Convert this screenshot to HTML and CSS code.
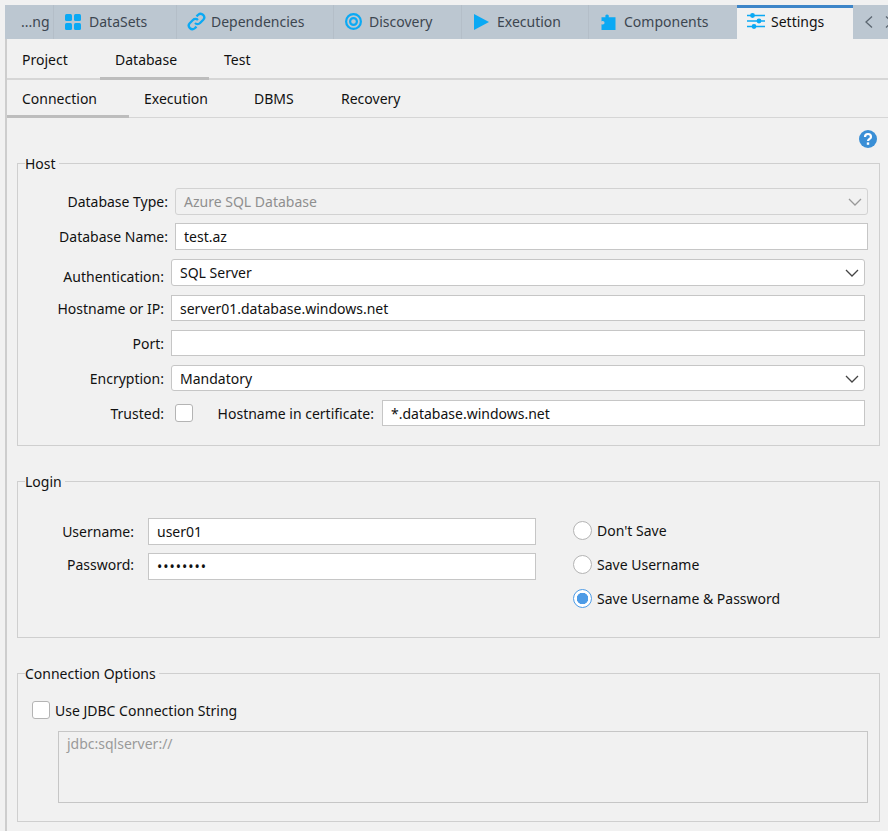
FILE: index.html
```html
<!DOCTYPE html>
<html lang="en">
<head>
    <meta charset="UTF-8">
    <title>Database Settings</title>
    <link rel="stylesheet" href="styles.css">
</head>
<body>
    <div class="tabbar">
        <div class="tab tab-cut">...ng</div>
        <div class="tab tab-datasets">
            <svg class="icon" width="16" height="16" viewBox="0 0 16 16"><rect x="0" y="0" width="7" height="7" rx="1.5"/><rect x="9" y="0" width="7" height="7" rx="1.5"/><rect x="0" y="9" width="7" height="7" rx="1.5"/><rect x="9" y="9" width="7" height="7" rx="1.5"/></svg>
            DataSets
        </div>
        <div class="tab tab-deps">
            <svg class="icon" width="19" height="19" viewBox="0 0 18 18"><path class="line" d="M7.6 10.4a3.4 3.4 0 0 0 4.8 0l3-3a3.4 3.4 0 0 0-4.8-4.8L9 4.2"/><path class="line" d="M10.4 7.6a3.4 3.4 0 0 0-4.8 0l-3 3a3.4 3.4 0 0 0 4.8 4.8L9 13.8"/></svg>
            Dependencies
        </div>
        <div class="tab tab-discovery">
            <svg class="icon" width="17" height="17" viewBox="0 0 17 17"><circle class="line" cx="8.5" cy="8.5" r="7.4"/><circle class="line" cx="8.5" cy="8.5" r="3.4"/></svg>
            Discovery
        </div>
        <div class="tab tab-execution">
            <svg class="icon" width="15" height="16" viewBox="0 0 15 16"><path d="M0 0L15 8L0 16Z"/></svg>
            Execution
        </div>
        <div class="tab tab-components">
            <svg class="icon" width="15" height="16" viewBox="0 0 15 16"><path d="M6 0.5C7.5 0.5 8.2 1.5 7.7 3.2H14.5V16H0.5V10.2C2.3 11 3.5 10.2 3.5 8.8C3.5 7.4 2.3 6.6 0.5 7.4V3.2H4.5C4 1.5 4.6 0.5 6 0.5Z"/></svg>
            Components
        </div>
        <div class="tab tab-active">
            <svg class="icon" width="18" height="16" viewBox="0 0 18 16"><path class="bar" d="M0 2.5H18M0 8H18M0 13.5H18"/><circle cx="5.5" cy="2.5" r="2.4"/><circle cx="12" cy="8" r="2.4"/><circle cx="7" cy="13.5" r="2.4"/></svg>
            Settings
        </div>
        <div class="tab-nav">
            <svg width="10" height="14" viewBox="0 0 10 14"><path d="M8 1.5L2 7L8 12.5"/></svg>
            <svg width="10" height="14" viewBox="0 0 10 14"><path d="M2 1.5L8 7L2 12.5"/></svg>
        </div>
    </div>

    <div class="panel">
        <div class="subtabs">
            <div class="subtab subtab-project">Project</div>
            <div class="subtab subtab-database selected">Database</div>
            <div class="subtab subtab-test">Test</div>
        </div>
        <div class="subtabs subtabs-inner">
            <div class="subtab subtab-connection selected">Connection</div>
            <div class="subtab subtab-execution">Execution</div>
            <div class="subtab subtab-dbms">DBMS</div>
            <div class="subtab subtab-recovery">Recovery</div>
        </div>

        <div class="help-row">
            <svg width="18" height="18" viewBox="0 0 18 18"><circle cx="9" cy="9" r="9" fill="#3a8fd6"/><path d="M6 7a3 3 0 0 1 6 0c0 1.8-3 2-3 4" fill="none" stroke="#fff" stroke-width="2.2"/><rect x="7.8" y="12.4" width="2.4" height="2.4" fill="#fff"/></svg>
        </div>

        <fieldset class="group group-host">
            <legend>Host</legend>
            <div class="row row-a">
                <label>Database Type:</label>
                <div class="field select disabled">Azure SQL Database<svg class="chevron" width="14" height="8" viewBox="0 0 14 8"><path d="M1 1L7 7L13 1"/></svg></div>
            </div>
            <div class="row row-a">
                <label>Database Name:</label>
                <div class="field">test.az</div>
            </div>
            <div class="row row-b row-auth">
                <label class="label-low">Authentication:</label>
                <div class="field select">SQL Server<svg class="chevron" width="14" height="8" viewBox="0 0 14 8"><path d="M1 1L7 7L13 1"/></svg></div>
            </div>
            <div class="row row-b">
                <label>Hostname or IP:</label>
                <div class="field">server01.database.windows.net</div>
            </div>
            <div class="row row-b">
                <label>Port:</label>
                <div class="field"></div>
            </div>
            <div class="row row-b">
                <label>Encryption:</label>
                <div class="field select">Mandatory<svg class="chevron" width="14" height="8" viewBox="0 0 14 8"><path d="M1 1L7 7L13 1"/></svg></div>
            </div>
            <div class="row row-b">
                <label>Trusted:</label>
                <div class="trusted">
                    <span class="checkbox"></span>
                    <label>Hostname in certificate:</label>
                    <div class="field">*.database.windows.net</div>
                </div>
            </div>
        </fieldset>

        <fieldset class="group group-login">
            <legend>Login</legend>
            <div class="login">
                <div class="login-fields">
                    <div class="row row-login">
                        <label>Username:</label>
                        <div class="field">user01</div>
                    </div>
                    <div class="row row-login">
                        <label class="label-raised">Password:</label>
                        <div class="field field-password">&#8226;&#8226;&#8226;&#8226;&#8226;&#8226;&#8226;&#8226;</div>
                    </div>
                </div>
                <div class="radios">
                    <div class="radio-row"><span class="radio"></span>Don't Save</div>
                    <div class="radio-row"><span class="radio"></span>Save Username</div>
                    <div class="radio-row"><span class="radio checked"></span>Save Username &amp; Password</div>
                </div>
            </div>
        </fieldset>

        <fieldset class="group group-options">
            <legend>Connection Options</legend>
            <div class="check-row"><span class="checkbox"></span>Use JDBC Connection String</div>
            <div class="jdbc">jdbc:sqlserver://</div>
        </fieldset>
    </div>
</body>
</html>
```

FILE: styles.css
```css
* {
    box-sizing: border-box;
}
body {
    margin: 0;
    height: 831px;
    overflow: hidden;
    background-color: #f1f1f1;
    color: #111;
    font-family: "Noto Sans", "Open Sans", sans-serif;
    font-size: 14px;
    line-height: 19px;
}
.tabbar {
    display: flex;
    height: 34px;
    margin: 5px 0 0 5px;
    background-color: #bcc7d1;
    color: #3c4650;
    overflow: hidden;
}
.tab {
    flex: none;
    display: flex;
    align-items: center;
    gap: 8px;
    height: 34px;
    padding-bottom: 1px;
    border-right: 1px solid #b4bec8;
    white-space: nowrap;
}
.tab-cut {
    width: 49px;
    padding-left: 16px;
}
.tab-datasets {
    width: 123px;
    padding-left: 11px;
}
.tab-deps {
    width: 157px;
    padding-left: 10px;
    gap: 5px;
}
.tab-discovery {
    width: 128px;
    padding-left: 11px;
    gap: 7px;
}
.tab-execution {
    width: 127px;
    padding-left: 12px;
}
.tab-components {
    width: 148px;
    padding-left: 12px;
    border-right: none;
}
.tab-active {
    width: 116px;
    padding: 0 0 5px 10px;
    gap: 6px;
    background-color: #f1f1f1;
    border-top: 3px solid #3d85c8;
    border-right: none;
    color: #111;
}
.icon {
    flex: none;
    fill: #0aa9f4;
}
.icon .line {
    fill: none;
    stroke: #0aa9f4;
    stroke-width: 2.2;
}
.icon .bar {
    fill: none;
    stroke: #0aa9f4;
    stroke-width: 1.6;
}
.tab-nav {
    flex: none;
    display: flex;
    align-items: center;
    gap: 10px;
    padding-left: 11px;
}
.tab-nav svg {
    flex: none;
}
.tab-nav path {
    fill: none;
    stroke: #5b6670;
    stroke-width: 1.3;
}
.panel {
    margin-left: 5px;
    border-left: 2px solid #cdcdcd;
    height: 792px;
}
.subtabs {
    display: flex;
    height: 41px;
    border-bottom: 2px solid #d6d6d6;
}
.subtabs-inner {
    height: 38px;
    border-bottom: 1px solid #d6d6d6;
}
.subtab {
    display: flex;
    align-items: center;
    height: 41px;
    padding-left: 15px;
}
.subtabs-inner .subtab {
    height: 38px;
    padding-bottom: 2px;
}
.selected {
    box-shadow: inset 0 -3px #bdbdbd;
}
.subtab-project {
    width: 93px;
}
.subtab-database {
    width: 109px;
}
.subtab-test {
    width: 58px;
}
.subtab-connection {
    width: 122px;
}
.subtab-execution {
    width: 110px;
}
.subtab-dbms {
    width: 87px;
}
.subtab-recovery {
    width: 93px;
}
.help-row {
    display: flex;
    justify-content: flex-end;
    height: 18px;
    margin: 12px 11px 0 0;
}
.group {
    margin: 0 8px 0 10px;
    padding: 0 11px 0 10px;
    border: 1px solid #cfcfcf;
    min-inline-size: 0;
}
.group legend {
    margin-left: -3px;
    padding: 0 3px 0 0;
}
.group-host {
    height: 292px;
    margin-top: 6px;
    padding-top: 15px;
}
.group-login {
    height: 166px;
    margin-top: 26px;
    padding-top: 22px;
}
.group-options {
    height: 158px;
    margin-top: 26px;
    padding-top: 17px;
}
.row {
    display: flex;
    align-items: center;
    gap: 7px;
}
.row label {
    text-align: right;
}
.row-a {
    height: 27px;
    margin-bottom: 8px;
}
.row-a + .row-auth {
    margin-top: 9px;
    height: 27px;
}
.row-a label {
    width: 140px;
    flex: none;
}
.row-b {
    height: 26px;
    margin: 0 3px 9px 0;
}
.row-b > label {
    width: 136px;
    flex: none;
}
.label-low {
    padding-top: 8px;
}
.label-raised {
    padding-bottom: 4px;
}
.field {
    flex: 1;
    display: flex;
    align-items: center;
    align-self: stretch;
    padding-left: 8px;
    background-color: #fff;
    border: 1px solid #c6c6c6;
    position: relative;
}
.field-password {
    letter-spacing: 1px;
}
.select {
    border-radius: 3px;
}
.disabled {
    background-color: #f1f1f1;
    color: #8f8f8f;
    border-color: #d2d2d2;
}
.chevron {
    position: absolute;
    right: 5px;
    top: 9px;
}
.chevron path {
    fill: none;
    stroke: #444;
    stroke-width: 1.3;
}
.disabled .chevron path {
    stroke: #999;
}
.trusted {
    flex: 1;
    display: flex;
    align-items: center;
    align-self: stretch;
}
.trusted label {
    align-self: center;
    width: 181px;
    flex: none;
    margin-right: 8px;
}
.checkbox {
    flex: none;
    width: 18px;
    height: 18px;
    background-color: #fff;
    border: 1px solid #b4b4b4;
    border-radius: 3px;
}
.trusted .checkbox {
    margin-left: 4px;
}
.login {
    display: flex;
}
.login-fields {
    width: 508px;
    padding-top: 5px;
}
.row-login {
    gap: 14px;
    margin-bottom: 8px;
    height: 27px;
}
.row-login label {
    width: 106px;
    flex: none;
}
.radios {
    margin-left: 37px;
}
.radio-row {
    display: flex;
    align-items: center;
    gap: 5px;
    height: 34px;
}
.radio {
    width: 19px;
    height: 19px;
    background-color: #fff;
    border: 1px solid #b4b4b4;
    border-radius: 50%;
}
.radio.checked {
    border-color: #4d9be6;
    background-image: radial-gradient(circle, #4d9be6 0, #4d9be6 5.5px, #fff 6px);
}
.check-row {
    display: flex;
    align-items: center;
    gap: 5px;
    height: 20px;
    margin-left: 4px;
}
.jdbc {
    height: 72px;
    margin: 11px 0 0 30px;
    padding: 2px 8px;
    border: 1px solid #c6c6c6;
    color: #9a9a9a;
}
```
